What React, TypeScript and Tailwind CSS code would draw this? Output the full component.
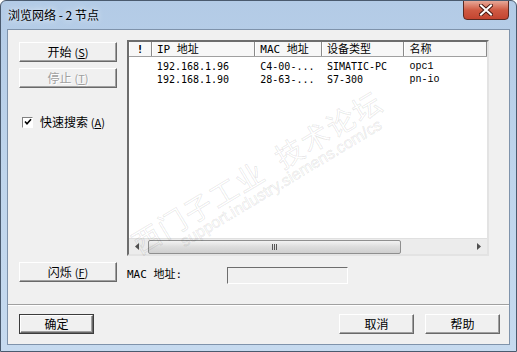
import React from 'react';

const cjk = "font-['Noto_Sans_CJK_SC',sans-serif]";
const mono = "font-['DejaVu_Sans_Mono','Noto_Sans_CJK_SC',monospace]";

function Btn({ label, hot, w = 'w-[98px]', disabled = false, isDefault = false }: { label: string; hot?: string; w?: string; disabled?: boolean; isDefault?: boolean }) {
  return (
    <div className={`${w} h-[20px] ${isDefault ? 'border border-[#3c3c3c]' : ''} bg-[#f0f0f0]`}>
      <div className="h-full w-full border border-t-white border-l-white border-r-[#696969] border-b-[#696969] shadow-[inset_-1px_-1px_0_#a0a0a0] flex items-center justify-center">
        <span className={`${cjk} text-[12px] leading-none ${disabled ? 'text-[#a0a0a0] [text-shadow:1px_1px_0_#fff]' : 'text-black'}`}>
          {label}
          {hot && <span className="ml-[3px] text-[11px]">(<span className="underline">{hot}</span>)</span>}
        </span>
      </div>
    </div>
  );
}

const COLS = [
  { name: '!', w: 'w-[23px]', center: true },
  { name: 'IP 地址', w: 'w-[104px]' },
  { name: 'MAC 地址', w: 'w-[67px]' },
  { name: '设备类型', w: 'w-[83px]' },
  { name: '名称', w: 'w-[83px]' },
];

const ROWS = [
  ['192.168.1.96', 'C4-00-...', 'SIMATIC-PC', 'opc1'],
  ['192.168.1.90', '28-63-...', 'S7-300', 'pn-io'],
];

export default function App() {
  return (
    <div className="relative w-[517px] h-[352px] overflow-hidden rounded-t-[6px] border border-[#4a5a6e] bg-gradient-to-b from-[#b3cbe6] via-[#bfd5ec] to-[#c6daef] flex flex-col">
      {/* Title bar */}
      <div className="h-[28px] shrink-0 flex items-center pl-[7px] relative">
        <span className={`${cjk} text-[12px] text-black [text-shadow:0_0_6px_#fff]`}>浏览网络 - 2 节点</span>
        <div className="absolute left-[462px] top-[-1px] w-[46px] h-[20px] rounded-b-[4px] border border-[#5b2a22] bg-gradient-to-b from-[#e6a898] via-[#cf5a43] to-[#c34430] flex items-center justify-center">
          <svg width="14" height="12" viewBox="0 0 14 12">
            <path d="M2 1.5 L12 10.5 M12 1.5 L2 10.5" stroke="#4a1a12" strokeWidth="4" strokeLinecap="square" />
            <path d="M2 1.5 L12 10.5 M12 1.5 L2 10.5" stroke="#fff" strokeWidth="2" strokeLinecap="square" />
          </svg>
        </div>
      </div>

      {/* Client area */}
      <div className="mx-[6px] mb-[6px] flex-1 border border-[#7f93ab] bg-[#f0f0f0] flex flex-col">
        <div className="flex pl-[11px] pt-[10px] gap-[10px]">
          {/* Left column */}
          <div className="flex flex-col pt-[2px]">
            <Btn label="开始" hot="S" />
            <div className="mt-[6px]"><Btn label="停止" hot="T" disabled /></div>
            <div className="mt-[25px] ml-[3px] flex items-center gap-[7px]">
              <div className="w-[11px] h-[11px] border border-t-[#808080] border-l-[#808080] border-r-white border-b-white bg-white flex items-center justify-center">
                <svg width="8" height="8" viewBox="0 0 8 8">
                  <path d="M1 3.5 L3 5.8 L7 1.2" stroke="#000" strokeWidth="1.6" fill="none" />
                </svg>
              </div>
              <span className={`${cjk} text-[12px] text-black`}>快速搜索 <span className="text-[11px]">(<span className="underline">A</span>)</span></span>
            </div>
          </div>

          {/* List view */}
          <div className="w-[362px] h-[216px] border-2 border-t-[#6d6d6d] border-l-[#6d6d6d] border-r-[#e3e3e3] border-b-[#e3e3e3] bg-white flex flex-col">
            <div className="flex h-[15px] shrink-0 bg-[#f7f7f7] border-b border-[#a0a0a0]">
              {COLS.map((c) => (
                <div key={c.name} className={`${c.w} h-full border-r border-[#8a8a8a] shadow-[inset_1px_0_0_#fff] flex items-center ${c.center ? 'justify-center font-bold' : 'pl-[5px]'}`}>
                  <span className={`${mono} text-[11px] leading-none text-black`}>{c.name}</span>
                </div>
              ))}
            </div>
            <div className="flex-1 pt-[3px]">
              {ROWS.map((r) => (
                <div key={r[0]} className="flex h-[13px] items-center">
                  <div className="w-[23px]" />
                  <div className={`w-[104px] pl-[5px] ${mono} text-[10px] leading-none`}>{r[0]}</div>
                  <div className={`w-[67px] pl-[5px] ${mono} text-[10px] leading-none`}>{r[1]}</div>
                  <div className={`w-[83px] pl-[5px] ${mono} text-[10px] leading-none`}>{r[2]}</div>
                  <div className="w-[83px] pl-[5px] font-['Liberation_Mono',monospace] text-[10px] leading-none">{r[3]}</div>
                </div>
              ))}
            </div>
            {/* Horizontal scrollbar */}
            <div className="h-[16px] shrink-0 bg-[#ececec] border-t border-[#e0e0e0] flex items-center">
              <div className="w-[16px] h-full flex items-center justify-center">
                <svg width="4" height="7" viewBox="0 0 4 7"><path d="M4 0 L0 3.5 L4 7 Z" fill="#505050" /></svg>
              </div>
              <div className="ml-[3px] w-[253px] h-[14px] rounded-[2px] border border-[#8f8f8f] bg-gradient-to-b from-[#f2f2f2] via-[#dcdcdc] to-[#cfcfcf] flex items-center justify-center gap-[1px]">
                <div className="w-[1px] h-[6px] bg-[#555]" />
                <div className="w-[1px] h-[6px] bg-[#555]" />
                <div className="w-[1px] h-[6px] bg-[#555]" />
              </div>
              <div className="flex-1" />
              <div className="w-[16px] h-full flex items-center justify-center">
                <svg width="4" height="7" viewBox="0 0 4 7"><path d="M0 0 L4 3.5 L0 7 Z" fill="#505050" /></svg>
              </div>
            </div>
          </div>
        </div>

        {/* Flash row */}
        <div className="flex pl-[11px] mt-[6px] items-start">
          <Btn label="闪烁" hot="F" />
          <span className={`${mono} text-[11px] ml-[10px] mt-[5px] text-black`}>MAC 地址:</span>
          <div className="ml-[45px] mt-[5px] w-[121px] h-[17px] border border-t-[#6d6d6d] border-l-[#6d6d6d] border-r-white border-b-white bg-[#f0f0f0]" />
        </div>

        {/* Separator */}
        <div className="mt-[20px] h-[2px] border-t border-[#a0a0a0] border-b border-b-white" />

        {/* Bottom buttons */}
        <div className="flex pl-[11px] pr-[9px] mt-[8px]">
          <Btn label="确定" w="w-[75px]" isDefault />
          <div className="flex-1" />
          <Btn label="取消" w="w-[75px]" />
          <div className="ml-[11px]"><Btn label="帮助" w="w-[75px]" /></div>
        </div>
      </div>

      {/* Watermark */}
      <div className="pointer-events-none absolute left-[105px] top-[155px] w-[310px] -rotate-[31deg] flex flex-col items-center">
        <span className={`${cjk} text-[28px] leading-none tracking-[2px] text-transparent [-webkit-text-stroke:1px_rgba(0,0,0,0.09)]`}>西门子工业&nbsp;&nbsp;技术论坛</span>
        <span className="font-['Liberation_Sans',sans-serif] text-[16px] leading-none mt-[1px] ml-[30px] text-transparent [-webkit-text-stroke:1px_rgba(0,0,0,0.08)]">support.industry.siemens.com/cs</span>
      </div>
    </div>
  );
}
